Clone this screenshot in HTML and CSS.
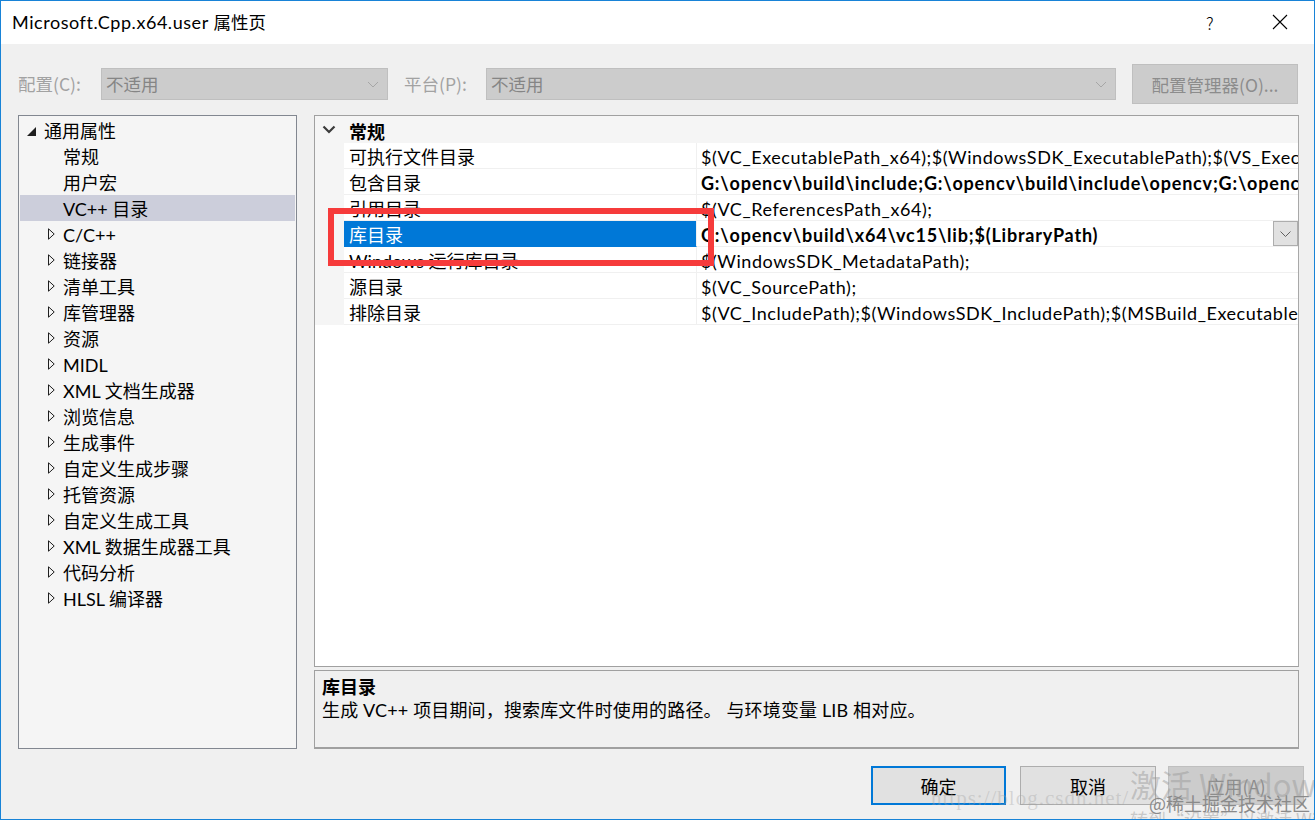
FILE: index.html
```html
<!DOCTYPE html>
<html lang="zh-CN">
<head>
<meta charset="utf-8">
<title>Microsoft.Cpp.x64.user 属性页</title>
<link rel="stylesheet" href="styles.css">
</head>
<body>
<div class="window">
  <header class="titlebar">
    <div class="title">Microsoft.Cpp.x64.user <span class="title-cjk">属性页</span></div>
    <div class="caption">
      <span class="help">?</span>
      <svg class="close" width="16" height="16" viewBox="0 0 16 16"><path d="M1 1L15 15M15 1L1 15" stroke="#000" stroke-width="1.1" fill="none"/></svg>
    </div>
  </header>

  <div class="content">
    <div class="toolbar">
      <span class="lbl lbl-config">配置(C):</span>
      <div class="combo combo-config">
        <span class="combo-text">不适用</span>
        <svg class="combo-chev" width="12" height="7" viewBox="0 0 12 7"><path d="M1 1L6 6L11 1" stroke="#a6a6a6" stroke-width="1" fill="none"/></svg>
      </div>
      <span class="lbl lbl-platform">平台(P):</span>
      <div class="combo combo-platform">
        <span class="combo-text">不适用</span>
        <svg class="combo-chev" width="12" height="7" viewBox="0 0 12 7"><path d="M1 1L6 6L11 1" stroke="#a6a6a6" stroke-width="1" fill="none"/></svg>
      </div>
      <div class="btn-manager">配置管理器(O)...</div>
    </div>

    <div class="main">
      <div class="tree">
        <div class="node node-exp"><span class="slot slot-exp"><svg width="9" height="9" viewBox="0 0 9 9"><path d="M9 0L9 9L0 9Z" fill="#1e1e1e"/></svg></span>通用属性</div>
        <div class="node node-child">常规</div>
        <div class="node node-child">用户宏</div>
        <div class="node node-child node-sel">VC++ 目录</div>
        <div class="node node-col"><span class="slot slot-col"><svg width="7" height="12" viewBox="0 0 7 12"><path d="M0.5 0.8L6.2 6L0.5 11.2Z" stroke="#1e1e1e" stroke-width="1" fill="none"/></svg></span>C/C++</div>
        <div class="node node-col"><span class="slot slot-col"><svg width="7" height="12" viewBox="0 0 7 12"><path d="M0.5 0.8L6.2 6L0.5 11.2Z" stroke="#1e1e1e" stroke-width="1" fill="none"/></svg></span>链接器</div>
        <div class="node node-col"><span class="slot slot-col"><svg width="7" height="12" viewBox="0 0 7 12"><path d="M0.5 0.8L6.2 6L0.5 11.2Z" stroke="#1e1e1e" stroke-width="1" fill="none"/></svg></span>清单工具</div>
        <div class="node node-col"><span class="slot slot-col"><svg width="7" height="12" viewBox="0 0 7 12"><path d="M0.5 0.8L6.2 6L0.5 11.2Z" stroke="#1e1e1e" stroke-width="1" fill="none"/></svg></span>库管理器</div>
        <div class="node node-col"><span class="slot slot-col"><svg width="7" height="12" viewBox="0 0 7 12"><path d="M0.5 0.8L6.2 6L0.5 11.2Z" stroke="#1e1e1e" stroke-width="1" fill="none"/></svg></span>资源</div>
        <div class="node node-col"><span class="slot slot-col"><svg width="7" height="12" viewBox="0 0 7 12"><path d="M0.5 0.8L6.2 6L0.5 11.2Z" stroke="#1e1e1e" stroke-width="1" fill="none"/></svg></span>MIDL</div>
        <div class="node node-col"><span class="slot slot-col"><svg width="7" height="12" viewBox="0 0 7 12"><path d="M0.5 0.8L6.2 6L0.5 11.2Z" stroke="#1e1e1e" stroke-width="1" fill="none"/></svg></span>XML 文档生成器</div>
        <div class="node node-col"><span class="slot slot-col"><svg width="7" height="12" viewBox="0 0 7 12"><path d="M0.5 0.8L6.2 6L0.5 11.2Z" stroke="#1e1e1e" stroke-width="1" fill="none"/></svg></span>浏览信息</div>
        <div class="node node-col"><span class="slot slot-col"><svg width="7" height="12" viewBox="0 0 7 12"><path d="M0.5 0.8L6.2 6L0.5 11.2Z" stroke="#1e1e1e" stroke-width="1" fill="none"/></svg></span>生成事件</div>
        <div class="node node-col"><span class="slot slot-col"><svg width="7" height="12" viewBox="0 0 7 12"><path d="M0.5 0.8L6.2 6L0.5 11.2Z" stroke="#1e1e1e" stroke-width="1" fill="none"/></svg></span>自定义生成步骤</div>
        <div class="node node-col"><span class="slot slot-col"><svg width="7" height="12" viewBox="0 0 7 12"><path d="M0.5 0.8L6.2 6L0.5 11.2Z" stroke="#1e1e1e" stroke-width="1" fill="none"/></svg></span>托管资源</div>
        <div class="node node-col"><span class="slot slot-col"><svg width="7" height="12" viewBox="0 0 7 12"><path d="M0.5 0.8L6.2 6L0.5 11.2Z" stroke="#1e1e1e" stroke-width="1" fill="none"/></svg></span>自定义生成工具</div>
        <div class="node node-col"><span class="slot slot-col"><svg width="7" height="12" viewBox="0 0 7 12"><path d="M0.5 0.8L6.2 6L0.5 11.2Z" stroke="#1e1e1e" stroke-width="1" fill="none"/></svg></span>XML 数据生成器工具</div>
        <div class="node node-col"><span class="slot slot-col"><svg width="7" height="12" viewBox="0 0 7 12"><path d="M0.5 0.8L6.2 6L0.5 11.2Z" stroke="#1e1e1e" stroke-width="1" fill="none"/></svg></span>代码分析</div>
        <div class="node node-col"><span class="slot slot-col"><svg width="7" height="12" viewBox="0 0 7 12"><path d="M0.5 0.8L6.2 6L0.5 11.2Z" stroke="#1e1e1e" stroke-width="1" fill="none"/></svg></span>HLSL 编译器</div>
      </div>

      <div class="right">
        <div class="grid">
          <div class="cat">
            <span class="cat-chev"><svg width="14" height="9" viewBox="0 0 14 9"><path d="M1.5 1.5L7 7L12.5 1.5" stroke="#3c3c3c" stroke-width="2.2" fill="none"/></svg></span>
            <span class="cat-name">常规</span>
          </div>
          <div class="row"><div class="gutter"></div><div class="name">可执行文件目录</div><div class="value"><span class="vtext">$(VC_ExecutablePath_x64);$(WindowsSDK_ExecutablePath);$(VS_ExecutablePath);$(MSBuild_ExecutablePath);$(FxCopDir);$(PATH);</span></div></div>
          <div class="row"><div class="gutter"></div><div class="name">包含目录</div><div class="value bold"><span class="vtext">G:\opencv\build\include;G:\opencv\build\include\opencv;G:\opencv\build\include\opencv2;$(IncludePath)</span></div></div>
          <div class="row"><div class="gutter"></div><div class="name">引用目录</div><div class="value"><span class="vtext">$(VC_ReferencesPath_x64);</span></div></div>
          <div class="row row-sel"><div class="gutter"></div><div class="name">库目录</div><div class="value bold"><span class="vtext">G:\opencv\build\x64\vc15\lib;$(LibraryPath)</span><span class="dd"><svg width="11" height="6" viewBox="0 0 11 6"><path d="M0.5 0.5L5.5 5.5L10.5 0.5" stroke="#606060" stroke-width="1" fill="none"/></svg></span></div></div>
          <div class="row"><div class="gutter"></div><div class="name">Windows 运行库目录</div><div class="value"><span class="vtext">$(WindowsSDK_MetadataPath);</span></div></div>
          <div class="row"><div class="gutter"></div><div class="name">源目录</div><div class="value"><span class="vtext">$(VC_SourcePath);</span></div></div>
          <div class="row"><div class="gutter"></div><div class="name">排除目录</div><div class="value"><span class="vtext">$(VC_IncludePath);$(WindowsSDK_IncludePath);$(MSBuild_ExecutablePath);$(VC_LibraryPath_x64);</span></div></div>
        </div>
        <div class="desc">
          <div class="desc-title">库目录</div>
          <div class="desc-text">生成 VC++ 项目期间，搜索库文件时使用的路径。 与环境变量 LIB 相对应。</div>
        </div>
      </div>
    </div>

    <div class="footer">
      <div class="btn btn-ok">确定</div>
      <div class="btn btn-cancel">取消</div>
      <div class="btn btn-apply">应用(A)</div>
    </div>
  </div>

  <div class="highlight"></div>
  <div class="wm wm-activate">激活 Windows</div>
  <div class="wm wm-goto">转到“设置”以激活 Windows。</div>
  <div class="wm wm-url">https://blog.csdn.net/</div>
  <div class="wm wm-juejin">@稀土掘金技术社区</div>
</div>
</body>
</html>
```

FILE: styles.css
```css
* { box-sizing: border-box; }

html, body {
  margin: 0;
  padding: 0;
  background: #f0f0f0;
}

body {
  font-family: "Lato", "Noto Sans CJK SC", sans-serif;
  color: #000;
}

.window {
  position: relative;
  width: 1315px;
  height: 820px;
  border: 1px solid #1883d7;
  background: #f0f0f0;
  overflow: hidden;
}

/* title bar */
.titlebar {
  height: 43px;
  background: #fff;
  display: flex;
  align-items: center;
  justify-content: space-between;
  padding-left: 11px;
}

.title {
  font-size: 18px;
  letter-spacing: 0.55px;
  line-height: 24px;
  white-space: nowrap;
}

.title-cjk {
  font-size: 17.5px;
  letter-spacing: 0;
}

.caption {
  display: flex;
  align-items: center;
  height: 100%;
}

.help {
  font-family: "Noto Sans CJK SC", sans-serif;
  font-size: 17px;
  font-weight: 300;
  line-height: 20px;
  width: 66px;
  text-align: left;
}

.close {
  margin-right: 26px;
  margin-top: -1px;
}

/* toolbar */
.toolbar {
  display: flex;
  align-items: center;
  height: 40px;
  margin-top: 20px;
  padding-left: 17px;
  font-size: 18px;
}

.lbl {
  color: #a2a2a2;
  font-family: "Noto Sans CJK SC", sans-serif;
  font-size: 17.5px;
  line-height: 24px;
}

.lbl-config { width: 83px; }
.lbl-platform { width: 82px; margin-left: 16px; }

.combo {
  height: 32px;
  background: #cccccc;
  border: 1px solid #bfbfbf;
  display: flex;
  align-items: center;
  justify-content: space-between;
  padding: 0 8px 0 4px;
}

.combo-config { width: 287px; }
.combo-platform { width: 630px; }

.combo-text {
  font-family: "Noto Sans CJK SC", sans-serif;
  font-size: 17.5px;
  line-height: 24px;
  color: #858585;
}

.btn-manager {
  margin-left: 16px;
  width: 166px;
  height: 40px;
  background: #cccccc;
  border: 1px solid #bfbfbf;
  color: #8c8c8c;
  font-family: "Noto Sans CJK SC", sans-serif;
  font-size: 17.5px;
  display: flex;
  align-items: center;
  justify-content: center;
}

/* main */
.main {
  display: flex;
  gap: 17px;
  margin-top: 11px;
  padding-left: 17px;
  height: 634px;
}

.tree {
  width: 279px;
  height: 634px;
  background: #f5f5f5;
  border: 1px solid #828790;
  padding: 1px;
}

.node {
  height: 26px;
  display: flex;
  align-items: center;
  font-size: 18px;
  line-height: 24px;
  padding-top: 2px;
  white-space: nowrap;
}

.node-exp { padding-left: 7px; }
.node-child { padding-left: 43px; }
.node-col { padding-left: 28px; }

.slot { display: flex; align-items: center; }
.slot-exp { width: 17px; }
.slot-col { width: 15px; margin-top: -2px; }

.node-sel { background: #cccedb; }

.right {
  width: 985px;
  display: flex;
  flex-direction: column;
  gap: 3px;
}

.grid {
  height: 552px;
  background: #fff;
  border: 1px solid #a0a0a0;
  border-right-color: #a8a8a8;
  overflow: hidden;
}

.cat {
  height: 27px;
  background: #f5f5f5;
  display: flex;
  align-items: center;
}

.cat-chev {
  width: 34px;
  display: flex;
  padding-left: 7px;
  margin-top: -1px;
}

.cat-name {
  font-size: 18px;
  font-weight: 700;
  font-family: "Noto Sans CJK SC", sans-serif;
  line-height: 24px;
  padding-top: 3px;
}

.row {
  display: flex;
  height: 26px;
}

.gutter {
  width: 29px;
  background: #f5f5f5;
}

.name {
  width: 353px;
  border-bottom: 1px solid #f0f0f0;
  border-right: 1px solid #f0f0f0;
  padding: 3px 0 0 5px;
  font-size: 18px;
  line-height: 22px;
  white-space: nowrap;
  overflow: hidden;
}

.value {
  flex: 1;
  min-width: 0;
  border-bottom: 1px solid #f0f0f0;
  padding-left: 4px;
  font-size: 18px;
  display: flex;
  align-items: flex-start;
}

.vtext {
  flex: 1;
  min-width: 0;
  white-space: nowrap;
  overflow: hidden;
  letter-spacing: 0.55px;
  line-height: 22px;
  padding-top: 3px;
}

.value.bold .vtext {
  font-weight: 700;
  letter-spacing: 0.8px;
}

.row-sel .name {
  background: #0078d7;
  color: #fff;
  border-bottom-color: #0078d7;
}

.dd {
  width: 25px;
  height: 25px;
  background: #e1e1e1;
  border: 1px solid #adadad;
  display: flex;
  align-items: center;
  justify-content: center;
  flex: none;
}

.desc {
  height: 79px;
  background: #f0f0f0;
  border: 1px solid #a0a0a0;
  border-bottom: 2px solid #a0a0a0;
  padding: 3px 0 0 7px;
}

.desc-title {
  font-family: "Noto Sans CJK SC", sans-serif;
  font-weight: 700;
  font-size: 18px;
  line-height: 24px;
}

.desc-text {
  font-size: 18px;
  line-height: 25px;
  letter-spacing: 0.15px;
}

/* footer */
.footer {
  display: flex;
  justify-content: flex-end;
  margin-top: 17px;
  padding-right: 10px;
}

.btn {
  width: 136px;
  height: 39px;
  background: #e1e1e1;
  border: 1px solid #adadad;
  display: flex;
  align-items: center;
  justify-content: center;
  font-family: "Noto Sans CJK SC", sans-serif;
  font-size: 18px;
}

.btn-ok { border: 2px solid #0078d7; width: 135px; margin-right: 14px; }
.btn-cancel { margin-right: 12px; }
.btn-apply {
  background: #cccccc;
  border-color: #bfbfbf;
  color: #8c8c8c;
}

/* overlays */
.highlight {
  position: absolute;
  left: 327px;
  top: 207px;
  width: 386px;
  height: 58px;
  border: 6px solid #f63b3b;
}

.wm {
  position: absolute;
  white-space: nowrap;
  pointer-events: none;
}

.wm-activate {
  left: 1129px;
  top: 763px;
  font-family: "Noto Sans CJK SC", sans-serif;
  font-size: 31px;
  line-height: 40px;
  color: rgba(150, 150, 150, 0.45);
}

.wm-goto {
  left: 1129px;
  top: 806px;
  font-family: "Noto Sans CJK SC", sans-serif;
  font-size: 18px;
  line-height: 24px;
  color: rgba(150, 150, 150, 0.45);
}

.wm-url {
  left: 930px;
  top: 784px;
  font-family: "Liberation Serif", serif;
  font-size: 21px;
  letter-spacing: 1px;
  line-height: 26px;
  color: rgba(160, 160, 160, 0.35);
}

.wm-juejin {
  left: 1148px;
  top: 790px;
  font-family: "Noto Sans CJK SC", serif;
  font-size: 18px;
  line-height: 24px;
  color: #8a8a8a;
}
```
